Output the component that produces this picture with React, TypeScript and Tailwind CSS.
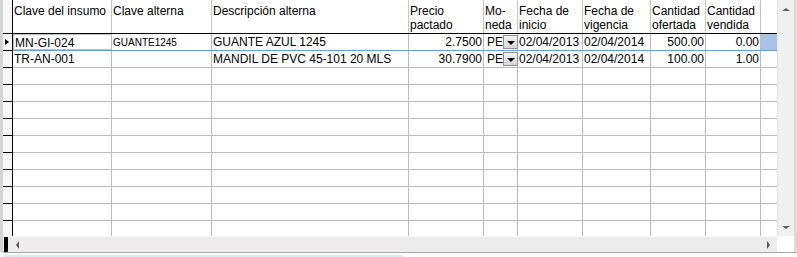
const cols = [
  { w: "w-[99px]", head: ["Clave del insumo"], align: "text-left" },
  { w: "w-[100px]", head: ["Clave alterna"], align: "text-left" },
  { w: "w-[197px]", head: ["Descripción alterna"], align: "text-left" },
  { w: "w-[75px]", head: ["Precio", "pactado"], align: "text-right" },
  { w: "w-[34px]", head: ["Mo-", "neda"], align: "text-left" },
  { w: "w-[65px]", head: ["Fecha de", "inicio"], align: "text-left" },
  { w: "w-[68px]", head: ["Fecha de", "vigencia"], align: "text-left" },
  { w: "w-[55px]", head: ["Cantidad", "ofertada"], align: "text-right" },
  { w: "w-[55px]", head: ["Cantidad", "vendida"], align: "text-right" },
];

const rows = [
  ["MN-GI-024", "GUANTE1245", "GUANTE AZUL 1245", "2.7500", "PE", "02/04/2013", "02/04/2014", "500.00", "0.00"],
  ["TR-AN-001", "", "MANDIL DE PVC 45-101 20 MLS", "30.7900", "PE", "02/04/2013", "02/04/2014", "100.00", "1.00"],
];

const EMPTY_ROWS = 10;

function ComboButton() {
  return (
    <div className="ml-auto mt-[1px] flex h-[14px] w-[15px] shrink-0 items-end justify-center border border-[#8e8f8f] bg-gradient-to-b from-[#f2f2f2] to-[#d6d6d6] pb-[3px]">
      <div className="h-0 w-0 border-x-[4px] border-t-[4px] border-x-transparent border-t-black" />
    </div>
  );
}

function Cell({ i, value, first }: { i: number; value: string; first?: boolean }) {
  const col = cols[i];
  if (i === 4 && value) {
    return (
      <div className={`${col.w} flex h-full shrink-0 border-r border-[#bdbdbd] pl-[3px]`}>
        <span className="leading-[16px]">{value}</span>
        <ComboButton />
      </div>
    );
  }
  return (
    <div
      className={`${col.w} ${col.align} h-full shrink-0 overflow-hidden whitespace-nowrap border-r border-[#bdbdbd] px-[1px] leading-[16px] ${
        first ? "border border-[#7ea3d2]" : ""
      } ${i === 1 ? "pt-[1px] text-[10px] leading-[13px]" : ""}`}
    >
      {value}
    </div>
  );
}

export default function App() {
  return (
    <div className="h-[257px] w-[797px] overflow-hidden bg-white font-['Liberation_Sans',Arial,sans-serif] text-[12px] text-black">
      <div className="flex h-[252px] border-l-[3px] border-r-[3px] border-l-[#d4d4d4] border-r-[#dadada]">
        <div className="flex w-[774px] shrink-0 flex-col">
          <div className="flex h-[236px] flex-col overflow-hidden">
            {/* column titles */}
            <div className="flex h-[34px] shrink-0 border-b border-black">
              <div className="h-full w-[10px] shrink-0 border-r border-black bg-[#f7f7f7]" />
              {cols.map((c, i) => (
                <div
                  key={i}
                  className={`${c.w} shrink-0 border-r border-[#c6c6c6] pl-[1px] pt-[4px] leading-[14px]`}
                >
                  {c.head.map((h) => (
                    <div key={h} className="whitespace-nowrap">
                      {h}
                    </div>
                  ))}
                </div>
              ))}
              <div className="flex-1" />
            </div>

            {/* data rows */}
            {rows.map((r, ri) => (
              <div
                key={ri}
                className={`flex shrink-0 ${ri === 0 ? "h-[17px] border-b border-[#6f9bd0]" : "h-[17px] border-b border-[#bdbdbd]"}`}
              >
                <div className="relative h-[calc(100%+1px)] w-[10px] shrink-0 border-b border-r border-black bg-[#f7f7f7]">
                  {ri === 0 && (
                    <div className="absolute left-[2px] top-[5px] h-0 w-0 border-y-[3px] border-l-[4px] border-y-transparent border-l-black" />
                  )}
                </div>
                {r.map((v, i) => (
                  <Cell key={i} i={i} value={v} first={ri === 0 && i === 0} />
                ))}
                <div className={`h-full flex-1 ${ri === 0 ? "bg-[#a9c3e6]" : ""}`} />
              </div>
            ))}
            {Array.from({ length: EMPTY_ROWS }).map((_, ri) => (
              <div key={ri} className="flex h-[17px] shrink-0 border-b border-[#bdbdbd]">
                <div className="h-[17px] w-[10px] shrink-0 border-b border-r border-black bg-[#f7f7f7]" />
                {cols.map((c, i) => (
                  <div key={i} className={`${c.w} h-full shrink-0 border-r border-[#bdbdbd]`} />
                ))}
                <div className="flex-1" />
              </div>
            ))}
          </div>

          {/* horizontal scroll bar */}
          <div className="relative flex h-[16px] items-center border-t border-[#f8f8f8] bg-[#ececec]">
            <div className="ml-[1px] h-full w-[4px] bg-black" />
            <div className="ml-[8px] h-0 w-0 border-y-[4px] border-r-[3px] border-y-transparent border-r-[#555]" />
            <div className="ml-auto mr-[7px] h-0 w-0 border-y-[4px] border-l-[3px] border-y-transparent border-l-[#555]" />
          </div>
        </div>

        {/* vertical scroll bar */}
        <div className="flex w-[17px] shrink-0 flex-col">
          <div className="flex h-[236px] flex-col items-center justify-between border-l border-[#e4e4e4] bg-[#f0f0f0] pb-[7px] pt-[8px]">
            <div className="h-0 w-0 border-x-[4px] border-b-[3px] border-x-transparent border-b-[#606060]" />
            <div className="h-0 w-0 border-x-[4px] border-t-[3px] border-x-transparent border-t-[#606060]" />
          </div>
          <div className="h-[16px] bg-white" />
        </div>
      </div>
      <div className="ml-[3px] h-[1px] bg-[#a9a9a9]" />
      <div className="ml-[3px] mt-[2px] h-[2px] w-[400px] bg-[#cdf1f6]" />
    </div>
  );
}
